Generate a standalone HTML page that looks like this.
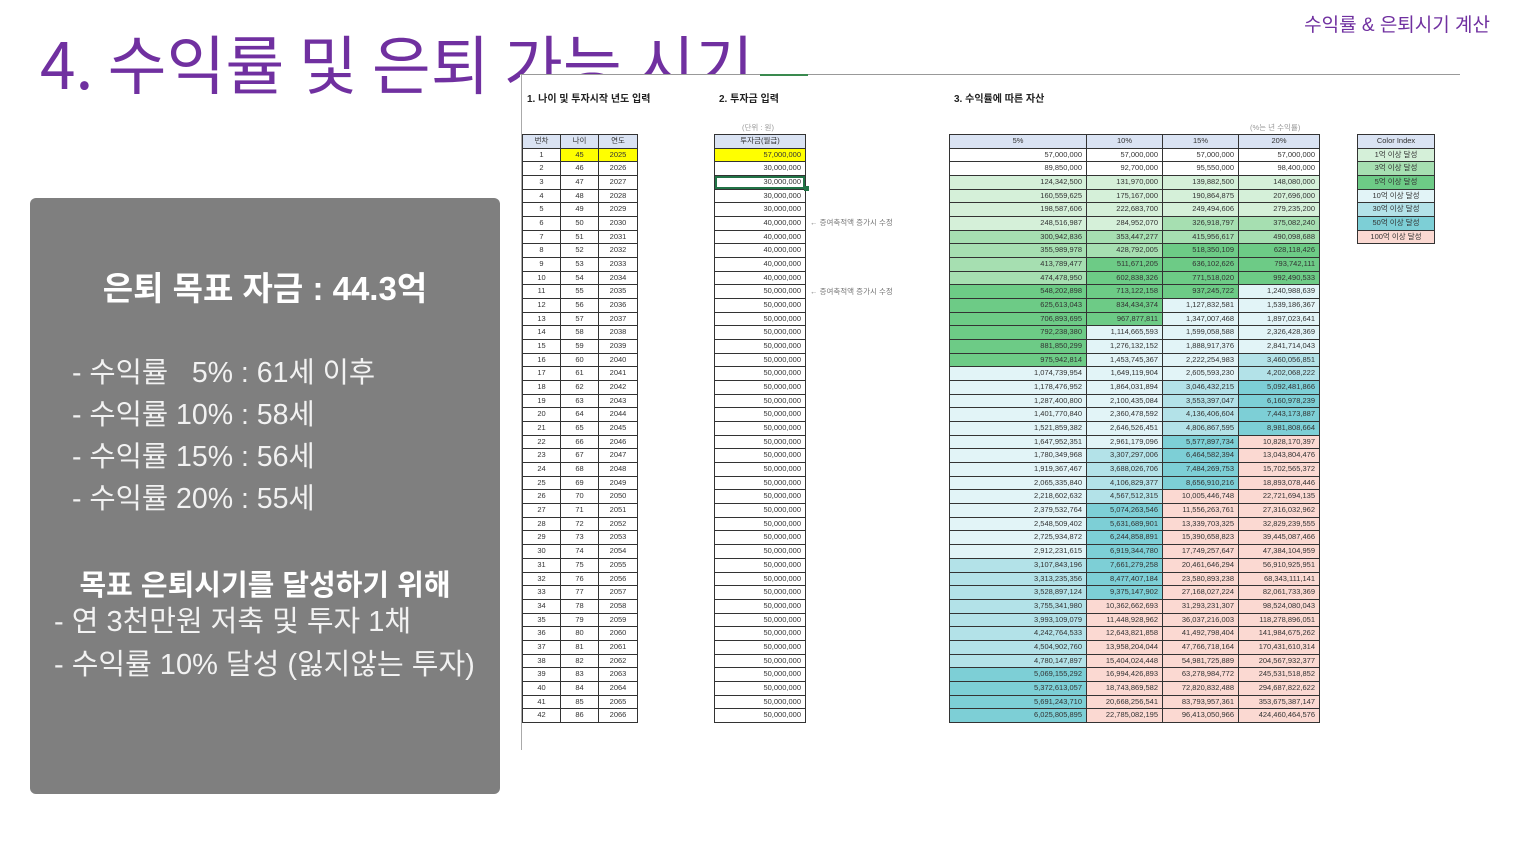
<!DOCTYPE html>
<html><head><meta charset="utf-8">
<style>
*{margin:0;padding:0;box-sizing:border-box}
body{width:1520px;height:855px;background:#fff;position:relative;overflow:hidden;font-family:"Liberation Sans","Noto Sans CJK KR",sans-serif}
.abs{position:absolute;white-space:nowrap}
#title{left:40px;top:22px;font-size:64px;color:#7030a0;letter-spacing:0px;line-height:80px;font-family:"Noto Sans CJK KR",sans-serif}
#sub{right:30px;top:10px;font-size:19px;color:#7030a0}
#cover{left:520px;top:75px;width:1000px;height:700px;background:#fff}
#box{left:30px;top:198px;width:470px;height:596px;background:#7f7f7f;border-radius:6px;color:#fff}
.g{position:absolute;display:grid;background:#333;gap:1px;padding:1px;grid-auto-rows:12.68px;font-size:7.5px;color:#333}
.g div{background:#fff;line-height:12.68px;overflow:hidden;white-space:nowrap}
.g1 div{text-align:center}
.g2 div,.g3 div{text-align:right;padding-right:4px}
.g .h{background:#dae3f3!important;text-align:center!important;padding:0!important}
.y{background:#ffff00!important}
.lbl{font-size:10px;font-weight:bold;color:#222}
.small{font-size:7.5px;color:#999}
</style></head><body>
<div id="title" class="abs">4. 수익률 및 은퇴 가능 시기</div>
<div id="sub" class="abs">수익률 &amp; 은퇴시기 계산</div>
<div id="cover" class="abs"></div>
<div class="abs" style="left:520px;top:74px;width:940px;height:1px;background:#999"></div>
<div class="abs" style="left:760px;top:74px;width:48px;height:2px;background:#3a8a4f"></div>
<div class="abs" style="left:521px;top:75px;width:1px;height:675px;background:#aaa"></div>

<div id="box" class="abs">
 <div class="abs" style="left:0;width:470px;text-align:center;top:64px;font-size:33px;font-weight:bold">은퇴 목표 자금 : 44.3억</div>
 <div class="abs" style="left:42px;top:154px;font-size:28.5px;line-height:42px;color:#f2f2f2">- 수익률 &nbsp;&nbsp;5% : 61세 이후<br>- 수익률 10% : 58세<br>- 수익률 15% : 56세<br>- 수익률 20% : 55세</div>
 <div class="abs" style="left:0;width:470px;text-align:center;top:364px;font-size:29px;font-weight:bold">목표 은퇴시기를 달성하기 위해</div>
 <div class="abs" style="left:24px;top:403px;font-size:29px;line-height:43px;color:#f2f2f2">- 연 3천만원 저축 및 투자 1채<br>- 수익률 10% 달성 (잃지않는 투자)</div>
</div>

<div class="abs lbl" style="left:527px;top:90px">1. 나이 및 투자시작 년도 입력</div>
<div class="abs lbl" style="left:719px;top:90px">2. 투자금 입력</div>
<div class="abs lbl" style="left:954px;top:90px">3. 수익률에 따른 자산</div>
<div class="abs small" style="left:742px;top:122px">(단위 : 원)</div>
<div class="abs small" style="left:1250px;top:122px">(%는 년 수익률)</div>
<div class="abs small" style="left:810px;top:217px;color:#777">← 증여축적액 증가시 수정</div>
<div class="abs small" style="left:810px;top:286px;color:#777">← 증여축적액 증가시 수정</div>

<div class="g g1" style="left:522px;top:134px;grid-template-columns:37px 37px 38px">
<div class="h">번차</div><div class="h">나이</div><div class="h">연도</div>
<div>1</div><div class="y">45</div><div class="y">2025</div>
<div>2</div><div>46</div><div>2026</div><div>3</div><div>47</div><div>2027</div><div>4</div><div>48</div><div>2028</div><div>5</div><div>49</div><div>2029</div><div>6</div><div>50</div><div>2030</div><div>7</div><div>51</div><div>2031</div><div>8</div><div>52</div><div>2032</div><div>9</div><div>53</div><div>2033</div><div>10</div><div>54</div><div>2034</div><div>11</div><div>55</div><div>2035</div><div>12</div><div>56</div><div>2036</div><div>13</div><div>57</div><div>2037</div><div>14</div><div>58</div><div>2038</div><div>15</div><div>59</div><div>2039</div><div>16</div><div>60</div><div>2040</div><div>17</div><div>61</div><div>2041</div><div>18</div><div>62</div><div>2042</div><div>19</div><div>63</div><div>2043</div><div>20</div><div>64</div><div>2044</div><div>21</div><div>65</div><div>2045</div><div>22</div><div>66</div><div>2046</div><div>23</div><div>67</div><div>2047</div><div>24</div><div>68</div><div>2048</div><div>25</div><div>69</div><div>2049</div><div>26</div><div>70</div><div>2050</div><div>27</div><div>71</div><div>2051</div><div>28</div><div>72</div><div>2052</div><div>29</div><div>73</div><div>2053</div><div>30</div><div>74</div><div>2054</div><div>31</div><div>75</div><div>2055</div><div>32</div><div>76</div><div>2056</div><div>33</div><div>77</div><div>2057</div><div>34</div><div>78</div><div>2058</div><div>35</div><div>79</div><div>2059</div><div>36</div><div>80</div><div>2060</div><div>37</div><div>81</div><div>2061</div><div>38</div><div>82</div><div>2062</div><div>39</div><div>83</div><div>2063</div><div>40</div><div>84</div><div>2064</div><div>41</div><div>85</div><div>2065</div><div>42</div><div>86</div><div>2066</div>
</div>

<div class="g g2" style="left:714px;top:134px;grid-template-columns:90px">
<div class="h">투자금(월급)</div><div class="y">57,000,000</div>
<div>30,000,000</div><div style="outline:2px solid #217346;outline-offset:-2px">30,000,000</div><div>30,000,000</div><div>30,000,000</div>
<div>40,000,000</div><div>40,000,000</div><div>40,000,000</div><div>40,000,000</div><div>40,000,000</div>
<div>50,000,000</div><div>50,000,000</div><div>50,000,000</div><div>50,000,000</div><div>50,000,000</div><div>50,000,000</div><div>50,000,000</div><div>50,000,000</div><div>50,000,000</div><div>50,000,000</div><div>50,000,000</div><div>50,000,000</div><div>50,000,000</div><div>50,000,000</div><div>50,000,000</div><div>50,000,000</div><div>50,000,000</div><div>50,000,000</div><div>50,000,000</div><div>50,000,000</div><div>50,000,000</div><div>50,000,000</div><div>50,000,000</div><div>50,000,000</div><div>50,000,000</div><div>50,000,000</div><div>50,000,000</div><div>50,000,000</div><div>50,000,000</div><div>50,000,000</div><div>50,000,000</div><div>50,000,000</div>
</div>
<div class="abs" style="left:804px;top:186px;width:5px;height:5px;background:#217346"></div>

<div class="g g3" id="t3" style="left:949px;top:134px;grid-template-columns:136px 75px 75px 80px">
<div class="h">5%</div><div class="h">10%</div><div class="h">15%</div><div class="h">20%</div>
<div>57,000,000</div><div>57,000,000</div><div>57,000,000</div><div>57,000,000</div>
<div>89,850,000</div><div>92,700,000</div><div>95,550,000</div><div>98,400,000</div>
<div>124,342,500</div><div>131,970,000</div><div>139,882,500</div><div>148,080,000</div>
<div>160,559,625</div><div>175,167,000</div><div>190,864,875</div><div>207,696,000</div>
<div>198,587,606</div><div>222,683,700</div><div>249,494,606</div><div>279,235,200</div>
<div>248,516,987</div><div>284,952,070</div><div>326,918,797</div><div>375,082,240</div>
<div>300,942,836</div><div>353,447,277</div><div>415,956,617</div><div>490,098,688</div>
<div>355,989,978</div><div>428,792,005</div><div>518,350,109</div><div>628,118,426</div>
<div>413,789,477</div><div>511,671,205</div><div>636,102,626</div><div>793,742,111</div>
<div>474,478,950</div><div>602,838,326</div><div>771,518,020</div><div>992,490,533</div>
<div>548,202,898</div><div>713,122,158</div><div>937,245,722</div><div>1,240,988,639</div>
<div>625,613,043</div><div>834,434,374</div><div>1,127,832,581</div><div>1,539,186,367</div>
<div>706,893,695</div><div>967,877,811</div><div>1,347,007,468</div><div>1,897,023,641</div>
<div>792,238,380</div><div>1,114,665,593</div><div>1,599,058,588</div><div>2,326,428,369</div>
<div>881,850,299</div><div>1,276,132,152</div><div>1,888,917,376</div><div>2,841,714,043</div>
<div>975,942,814</div><div>1,453,745,367</div><div>2,222,254,983</div><div>3,460,056,851</div>
<div>1,074,739,954</div><div>1,649,119,904</div><div>2,605,593,230</div><div>4,202,068,222</div>
<div>1,178,476,952</div><div>1,864,031,894</div><div>3,046,432,215</div><div>5,092,481,866</div>
<div>1,287,400,800</div><div>2,100,435,084</div><div>3,553,397,047</div><div>6,160,978,239</div>
<div>1,401,770,840</div><div>2,360,478,592</div><div>4,136,406,604</div><div>7,443,173,887</div>
<div>1,521,859,382</div><div>2,646,526,451</div><div>4,806,867,595</div><div>8,981,808,664</div>
<div>1,647,952,351</div><div>2,961,179,096</div><div>5,577,897,734</div><div>10,828,170,397</div>
<div>1,780,349,968</div><div>3,307,297,006</div><div>6,464,582,394</div><div>13,043,804,476</div>
<div>1,919,367,467</div><div>3,688,026,706</div><div>7,484,269,753</div><div>15,702,565,372</div>
<div>2,065,335,840</div><div>4,106,829,377</div><div>8,656,910,216</div><div>18,893,078,446</div>
<div>2,218,602,632</div><div>4,567,512,315</div><div>10,005,446,748</div><div>22,721,694,135</div>
<div>2,379,532,764</div><div>5,074,263,546</div><div>11,556,263,761</div><div>27,316,032,962</div>
<div>2,548,509,402</div><div>5,631,689,901</div><div>13,339,703,325</div><div>32,829,239,555</div>
<div>2,725,934,872</div><div>6,244,858,891</div><div>15,390,658,823</div><div>39,445,087,466</div>
<div>2,912,231,615</div><div>6,919,344,780</div><div>17,749,257,647</div><div>47,384,104,959</div>
<div>3,107,843,196</div><div>7,661,279,258</div><div>20,461,646,294</div><div>56,910,925,951</div>
<div>3,313,235,356</div><div>8,477,407,184</div><div>23,580,893,238</div><div>68,343,111,141</div>
<div>3,528,897,124</div><div>9,375,147,902</div><div>27,168,027,224</div><div>82,061,733,369</div>
<div>3,755,341,980</div><div>10,362,662,693</div><div>31,293,231,307</div><div>98,524,080,043</div>
<div>3,993,109,079</div><div>11,448,928,962</div><div>36,037,216,003</div><div>118,278,896,051</div>
<div>4,242,764,533</div><div>12,643,821,858</div><div>41,492,798,404</div><div>141,984,675,262</div>
<div>4,504,902,760</div><div>13,958,204,044</div><div>47,766,718,164</div><div>170,431,610,314</div>
<div>4,780,147,897</div><div>15,404,024,448</div><div>54,981,725,889</div><div>204,567,932,377</div>
<div>5,069,155,292</div><div>16,994,426,893</div><div>63,278,984,772</div><div>245,531,518,852</div>
<div>5,372,613,057</div><div>18,743,869,582</div><div>72,820,832,488</div><div>294,687,822,622</div>
<div>5,691,243,710</div><div>20,668,256,541</div><div>83,793,957,361</div><div>353,675,387,147</div>
<div>6,025,805,895</div><div>22,785,082,195</div><div>96,413,050,966</div><div>424,460,464,576</div>
</div>

<div class="g g1" style="left:1357px;top:134px;grid-template-columns:76px">
<div class="h">Color Index</div>
<div style="background:#d5f0d9">1억 이상 달성</div>
<div style="background:#a6dfb1">3억 이상 달성</div>
<div style="background:#6dcb86">5억 이상 달성</div>
<div style="background:#e2f4f7">10억 이상 달성</div>
<div style="background:#b3e2e8">30억 이상 달성</div>
<div style="background:#7dcfd6">50억 이상 달성</div>
<div style="background:#fbd9d2">100억 이상 달성</div>
</div>

<script>
document.querySelectorAll('#t3 div:not(.h)').forEach(function(c){
 var v=parseInt(c.textContent.replace(/,/g,''),10),b='#fff';
 if(v>=1e10)b='#fbd9d2';else if(v>=5e9)b='#7dcfd6';else if(v>=3e9)b='#b3e2e8';else if(v>=1e9)b='#e2f4f7';
 else if(v>=5e8)b='#6dcb86';else if(v>=3e8)b='#a6dfb1';else if(v>=1e8)b='#d5f0d9';
 c.style.background=b;
});
</script>
</body></html>
